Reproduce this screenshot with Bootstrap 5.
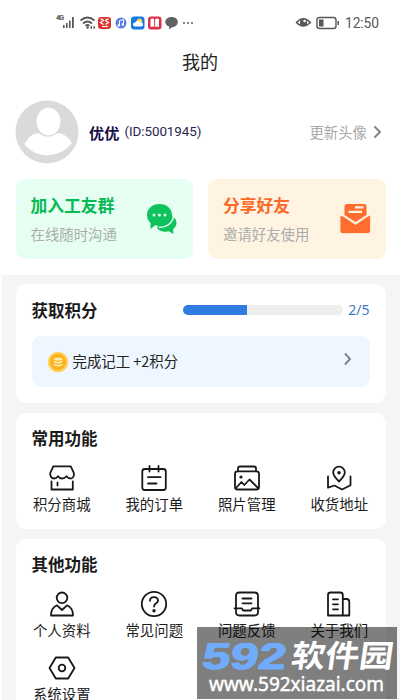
<!DOCTYPE html>
<html lang="zh-CN">
<head>
<meta charset="utf-8">
<meta name="viewport" content="width=device-width, initial-scale=1">
<title>我的</title>
<link href="https://cdn.jsdelivr.net/npm/bootstrap@5.3.0/dist/css/bootstrap.min.css" rel="stylesheet">
<style>
html,body{height:700px;overflow:hidden}
body{background:#fff;color:#1c1c1c;font-family:"Noto Sans CJK SC",sans-serif;font-size:14.4px;line-height:20px;position:relative}
svg{display:block;flex:none}
.statusbar{height:44px;padding:2px 21px 0 56px;color:#58585a;font-family:Roboto,"Noto Sans CJK SC",sans-serif}
.clock{font-size:13.8px;letter-spacing:-.1px;width:34px}
.page-title{height:36px;font-size:18px;line-height:34px;color:#222}
.profile{height:99px;padding:4px 17px 0 15px}
.user-name{font-size:15.2px;color:#17104a;margin-left:10px}
.user-id{font-family:Roboto,sans-serif;font-size:13.4px;color:#2a2550;margin-left:5px;white-space:nowrap;letter-spacing:-.05px;padding-top:1px}
.muted{color:#a9a9a9}
.promos{height:96px;gap:15px;padding:0 14.5px 0 15.5px}
.promo{height:80px;border-radius:9px;padding:0 15px}
.promo-green{background:#e6fff2}
.promo-orange{background:#fff3e2}
.promo h2{font-size:16.8px;line-height:24px;margin:-1px 0 7px;font-weight:700}
.promo p{line-height:20px;margin:0;white-space:nowrap;color:#aaaeaa}
.gray-area{background:#f5f5f5;height:425px;margin-left:2px;padding:9px 14.5px 0 13.5px;gap:10px}
.panel{background:#fff;border-radius:10px;padding:0 16px;flex:none}
.panel h3{font-size:16.5px;line-height:24px;font-weight:700;margin:0;color:#1b1b1b}
.points{height:119px}
.points-head{height:52px}
.points .progress{width:160px;height:10px;border-radius:5px;background:#eee}
.points .progress-bar{background:#2f7be0}
.score{font-family:"Noto Sans",sans-serif;font-size:14px;color:#3f79c4;width:27px;text-align:right}
.task{height:51px;border-radius:9px;background:#eef6ff;padding:0 17px 0 15px}
.task-text{font-size:14.4px;margin:-1px 0 0 4px;color:#222;letter-spacing:0}
.common{height:116px;padding-top:13px}
.other{height:180px;padding-top:13px}
.tiles{display:grid;grid-template-columns:repeat(4,92.5px);margin:13px -16px 0 -16px}
.tile{height:64px;text-align:center}
.tile svg{margin:0 auto}
.tile span{display:block;line-height:20px;margin-top:1px}
.line-icon{fill:none;stroke:#181818;stroke-width:1.8;stroke-linejoin:round;stroke-linecap:round}
.watermark{position:absolute;left:197px;top:627px;width:200px;height:72px;background:rgba(0,0,0,.5)}
</style>
<script src="https://cdn.jsdelivr.net/npm/bootstrap@5.3.0/dist/js/bootstrap.bundle.min.js"></script>
</head>
<body>
<header class="statusbar d-flex align-items-center">
  <svg width="140" height="22" viewBox="0 0 140 22" aria-hidden="true">
    <text x="0" y="8" font-size="7.5" font-weight="700" fill="#58585a" textLength="8">4G</text>
    <g fill="#58585a"><rect x="7" y="13" width="1.6" height="3"/><rect x="10" y="11" width="1.6" height="5"/><rect x="13" y="8.5" width="1.6" height="7.5"/><rect x="16" y="5" width="1.8" height="11"/></g>
    <g fill="none" stroke="#58585a" stroke-width="1.7"><path d="M24.5 8.5q7-6 14 0M27 11.5q4.500-4 9 0M29.500 14q2-2 4 0"/></g>
    <circle cx="31.500" cy="15.500" r="1.200" fill="#58585a"/><path d="M34 15.500l2-2v4zM39.500 15.500l-2-2v4z" fill="#58585a"/>
    <rect x="42" y="5" width="13" height="12" rx="3" fill="#d5382f"/><path d="M44.500 7.500q2-1 3 1l-3 2 3 2M52.500 7.500q-2-1-3 1l3 2-3 2M46 14.500h6" fill="none" stroke="#fff" stroke-width="1.200"/>
    <circle cx="65" cy="11" r="5.500" fill="#5b7fe5"/><path d="M63.500 13.500V8.500l4-1v5" fill="none" stroke="#fff"/><circle cx="62.800" cy="13.500" r="1.200" fill="#fff"/><circle cx="66.800" cy="12.500" r="1.200" fill="#fff"/>
    <rect x="75" y="4.500" width="13.500" height="13" rx="3" fill="#1478e6"/><circle cx="83.500" cy="9.300" r="2.700" fill="#ffd34c"/><path d="M79 14.500a2 2 0 010-4 3 3 0 015.500 0 2 2 0 011 4z" fill="#fff"/>
    <rect x="92" y="4.500" width="13.500" height="13" rx="3" fill="#dc2f49"/><path d="M94.500 7q2.500-1 4.200.5Q100.500 6 103 7v8q-2.500-1-4.300.3Q97 14 94.500 15z" fill="#fff"/><path d="M98.700 7v8" stroke="#dc2f49"/>
    <path d="M115.500 5c4 0 6.300 2.200 6.300 5s-2.300 5-5 5l-3.800 2.300.3-2.700c-2.400-.7-4-2.400-4-4.600 0-2.800 2.600-5 6.200-5z" fill="#626262"/>
    <g fill="#58585a"><circle cx="128" cy="11" r="1"/><circle cx="132" cy="11" r="1"/><circle cx="136" cy="11" r="1"/></g>
  </svg>
  <svg class="ms-auto me-1" width="46" height="18" viewBox="0 0 46 18" aria-hidden="true">
    <path d="M1.500 8.500q6.700-7.500 14 0-7.300 7-14 0z" fill="none" stroke="#58585a" stroke-width="1.500"/><circle cx="8.500" cy="8.500" r="3.600" fill="#58585a"/><circle cx="9.600" cy="7" r="1.300" fill="#fff"/>
    <rect x="22" y="3.500" width="19" height="11" rx="2.500" fill="none" stroke="#58585a" stroke-width="1.400"/><rect x="24" y="5.500" width="4.500" height="7" fill="#58585a"/><rect x="42.500" y="7" width="1.500" height="4" fill="#58585a"/>
  </svg>
  <span class="clock">12:50</span>
</header>
<h1 class="page-title text-center fw-normal m-0">我的</h1>
<section class="profile d-flex">
  <svg class="mt-3" width="64" height="64" viewBox="0 0 64 64" aria-hidden="true"><circle cx="32" cy="32" r="31.500" fill="#dadada"/><ellipse cx="33.500" cy="21.500" rx="12" ry="13.800" fill="#fff"/><path d="M9.500 44C14 36 20 32 24 33.500q9 6.500 18 0C48 32 54 38 57 43 46 58 21 60 9.500 44z" fill="#fff"/></svg>
  <div class="d-flex align-items-center w-100">
    <strong class="user-name text-nowrap">优优</strong><span class="user-id">(ID:5001945)</span>
    <span class="muted ms-auto text-nowrap">更新头像</span>
    <svg class="ms-1" width="12" height="16" viewBox="0 0 12 16" aria-hidden="true"><path d="M3.500 2.500L9 8l-5.500 5.500" fill="none" stroke="#828282" stroke-width="1.900"/></svg>
  </div>
</section>
<section class="promos d-flex">
  <article class="promo promo-green d-flex align-items-center flex-fill">
    <div><h2 style="color:#08ba55">加入工友群</h2><p>在线随时沟通</p></div>
    <svg class="ms-auto" width="32" height="32" viewBox="0 0 32 32" aria-hidden="true">
      <path d="M20 11.500c6 0 10.500 3.500 10.500 8.500 0 2.500-1.300 4.800-3.400 6.300l.2 4.700-4.600-2.700C18 29.500 13 28 11 25z" fill="#0ec25c"/>
      <path d="M13.500 1C20.700 1 26 5.700 26 12s-5.300 11-12.500 11c-1.500 0-3-.2-4.300-.7L4.500 26V20C2.300 18 1 15 1 12 1 5.700 6.300 1 13.500 1z" fill="#0ec25c"/>
      <path d="M27.500 12c0 7-5.500 12.200-14.500 12.500" fill="none" stroke="#e6fff2" stroke-width="1.500"/>
      <g fill="#e6fff2"><circle cx="8" cy="12" r="1.500"/><circle cx="13.500" cy="12" r="1.500"/><circle cx="19" cy="12" r="1.500"/></g>
    </svg>
  </article>
  <article class="promo promo-orange d-flex align-items-center flex-fill">
    <div><h2 style="color:#fb6a29">分享好友</h2><p>邀请好友使用</p></div>
    <svg class="ms-auto" width="32" height="32" viewBox="0 0 32 32" aria-hidden="true">
      <path d="M5.500 12V3.500A2.500 2.500 0 018 1h17a2.500 2.500 0 012.500 2.500V12L16.500 19z" fill="#ff6d2e"/>
      <path d="M9.500 8.800h13.500M16 4.300h8.500" stroke="#fff3e2" stroke-width="2.200"/>
      <path d="M1 14.500c0-2 1.500-2.500 3-1.500l12.500 8.500L29 13c1.500-1 2.500-.5 2.500 1.500V28a2.500 2.500 0 01-2.500 2.500H3.500A2.500 2.500 0 011 28z" fill="#ff6d2e" stroke="#fff3e2" stroke-width=".8"/>
    </svg>
  </article>
</section>
<main class="gray-area d-flex flex-column">
  <section class="panel points">
    <div class="points-head d-flex align-items-center">
      <h3>获取积分</h3>
      <div class="progress ms-auto"><div class="progress-bar" style="width:40%"></div></div>
      <span class="score">2/5</span>
    </div>
    <div class="task d-flex align-items-center">
      <svg width="22" height="22" viewBox="0 0 22 22" aria-hidden="true"><circle cx="11" cy="11" r="10.300" fill="#ffd15a"/><circle cx="11" cy="11" r="8" fill="#f8b01d"/><g fill="#ffe9a8"><ellipse cx="11" cy="8" rx="4.500" ry="1.600"/><path d="M6.500 9.500q4.500 2.400 9 0v1.700q-4.500 2.400-9 0zM6.500 12.500q4.500 2.400 9 0v1.700q-4.500 2.400-9 0z"/></g></svg>
      <span class="task-text">完成记工 +2积分</span>
      <svg class="ms-auto mb-1" width="10" height="18" viewBox="0 0 10 18" aria-hidden="true"><path d="M2 2.500L7 8l-5 5.500" fill="none" stroke="#7c8290" stroke-width="1.900"/></svg>
    </div>
  </section>
  <section class="panel common">
    <h3>常用功能</h3>
    <div class="tiles">
      <div class="tile"><svg class="line-icon" width="30" height="30" viewBox="0 0 30 30"><path d="M6.300 3.300h17.500l3 6.500c.8 3.300-1 5.700-3.300 5.700-1.500 0-2.800-.8-4-2.300-1.200 1.500-2.800 2.300-4.400 2.300s-3-.8-4-2.300c-1.200 1.500-2.600 2.300-4 2.300-2.500 0-4.500-2.400-3.800-5.700zM4.500 18.500v8h21.300v-8M10.500 19.500v3"/></svg><span>积分商城</span></div>
      <div class="tile"><svg class="line-icon" width="30" height="30" viewBox="0 0 30 30"><rect x="3.300" y="6" width="23.500" height="21" rx="2.500"/><path d="M10.500 3v5.500M19.500 3v5.500M9 14.200h12.500M9 20.500h8.500"/></svg><span>我的订单</span></div>
      <div class="tile"><svg class="line-icon" width="30" height="30" viewBox="0 0 30 30"><path d="M6 8V5.500q0-2 2-2h14q2 0 2 2V8"/><rect x="3" y="8.300" width="24" height="18.200" rx="2.500"/><path d="M4 25l5.500-6 2.800 3 5.200-5.500L26 25"/><circle cx="9" cy="14" r="1.600" fill="#181818" stroke="none"/></svg><span>照片管理</span></div>
      <div class="tile"><svg class="line-icon" width="30" height="30" viewBox="0 0 30 30"><path d="M15 18.500c-3.500-3.500-5.800-6-5.800-9a5.800 5.800 0 0111.600 0c0 3-2.300 5.500-5.800 9zM4 13.500v11.200l6.500-2.200 7.500 4 8.500-4.300v-8.700"/><circle cx="15" cy="9.800" r=".9" fill="#181818"/></svg><span>收货地址</span></div>
    </div>
  </section>
  <section class="panel other">
    <h3>其他功能</h3>
    <div class="tiles">
      <div class="tile"><svg class="line-icon" width="30" height="30" viewBox="0 0 30 30"><circle cx="15" cy="8.800" r="5.300"/><path d="M4 26.500c0-5 2.200-8.500 6-10.200l5 4.700 5-4.700c3.800 1.700 6 5.200 6 10.200z"/></svg><span>个人资料</span></div>
      <div class="tile"><svg class="line-icon" width="30" height="30" viewBox="0 0 30 30"><circle cx="15" cy="15" r="12.200"/><path d="M11 11.800c0-5 8-5 8 0 0 2.600-4 2.500-4 5.700"/><circle cx="15" cy="21.800" r=".8" fill="#181818"/></svg><span>常见问题</span></div>
      <div class="tile"><svg class="line-icon" width="30" height="30" viewBox="0 0 30 30"><path d="M4 18.500V7q0-3.500 3.500-3.500h15Q26 3.500 26 7v11.500M2.500 19.300h7.200l1.500 2.200h7.600l1.500-2.200h7.200M4 19.500V23q0 3.500 3.500 3.500h15Q26 26.500 26 23v-3.500M10.500 9.500h9M10.500 14.300h9"/></svg><span>问题反馈</span></div>
      <div class="tile"><svg class="line-icon" width="30" height="30" viewBox="0 0 30 30"><path d="M4 26.500V6q0-2.500 2.500-2.500h9.800q2.500 0 2.500 2.500v20.500zM19 10h3.500q2.800 0 2.800 2.800v13.700H19M9 10.300h5M9 15.300h5M9 20.300h5"/></svg><span>关于我们</span></div>
      <div class="tile"><svg class="line-icon" width="30" height="30" viewBox="0 0 30 30"><path d="M8.800 4.500h12.400L27.500 15l-6.300 10.500H8.800L2.500 15z"/><circle cx="15" cy="15" r="3.300"/></svg><span>系统设置</span></div>
    </div>
  </section>
</main>
<aside class="watermark">
  <svg width="200" height="72" viewBox="0 0 200 72">
    <text transform="translate(4 42) skewX(-8)" font-family="Liberation Sans" font-weight="700" font-size="37" fill="#70acfb" stroke="#70acfb" stroke-width="1" textLength="84" lengthAdjust="spacingAndGlyphs">592</text>
    <text transform="translate(93 40) skewX(-8)" font-family="Noto Sans CJK SC" font-weight="700" font-size="31" fill="#fff" textLength="102" lengthAdjust="spacingAndGlyphs">软件园</text>
    <text x="12" y="64" font-family="Noto Sans" font-size="20.500" fill="#fff" stroke="#fff" stroke-width=".5" textLength="175" lengthAdjust="spacingAndGlyphs">www.592xiazai.com</text>
  </svg>
</aside>
</body>
</html>
